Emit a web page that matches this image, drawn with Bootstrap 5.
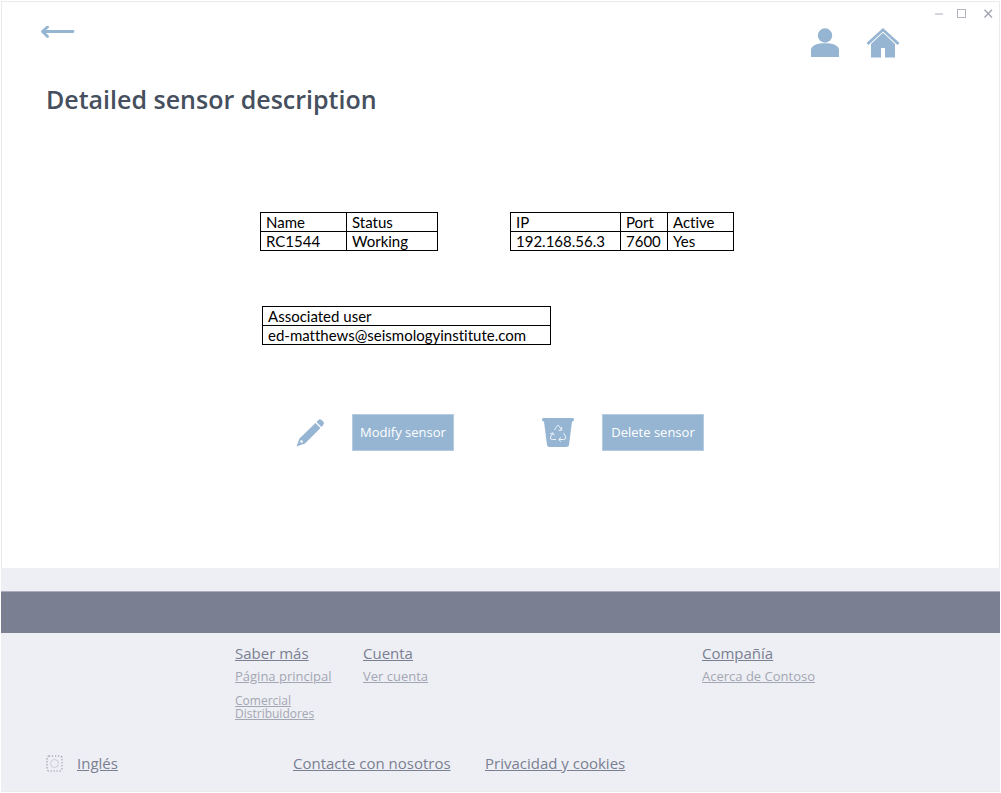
<!DOCTYPE html>
<html lang="en">
<head>
<meta charset="utf-8">
<meta name="viewport" content="width=device-width, initial-scale=1">
<title>Detailed sensor description</title>
<link href="https://cdn.jsdelivr.net/npm/bootstrap@5.3.0/dist/css/bootstrap.min.css" rel="stylesheet">
<style>
  :root { --accent: #95b5d2; --panel: #eeeff4; --slate: #7a7f92; --muted-link: #a3a6b3; }
  body { font-family: "Open Sans", "Noto Sans", sans-serif; background: #fff; padding: 1px; }
  .app-window { min-height: calc(100vh - 2px); border: 1px solid #ebebeb; }
  .plain-btn { border: 0; background: none; padding: 0; display: block; line-height: 0; }
  .title-bar { height: 24px; padding: 5px 5px 0 0; gap: 12px; }
  .tool-row { padding: 0 99px 0 38px; height: 32px; }
  .tool-nav { gap: 26px; }
  .page-title { font-size: 25px; font-weight: 600; line-height: 36px; color: #464f5d; margin: 23px 0 0 44px; }
  .details { padding-left: 258px; padding-top: 95px; }
  .pairs { column-gap: 72px; }
  .data-grid { border-collapse: collapse; font-family: Lato, sans-serif; font-size: 15px; font-variant-ligatures: none; line-height: 18px; color: #000; table-layout: fixed; }
  .data-grid th, .data-grid td { border: 1px solid #000; padding: 0 5px; font-weight: 400; white-space: nowrap; }
  .name-grid { width: 178px; } .ip-grid { width: 224px; }
  .col-a { width: 86px; } .col-ip { width: 110px; } .col-port { width: 47px; }
  .user-grid { width: 289px; margin: 55px 0 0 2px; }
  .actions { margin: 69px 0 0 36px; column-gap: 87px; }
  .action { column-gap: 27px; }
  .action svg { margin-right: -1px; }
  .action-btn { width: 102px; height: 37px; padding: 0; border: 1px solid #b4cbe0; border-radius: 0; background: var(--accent); color: #fff; font-size: 13px; }
  .action-btn:hover { background: #7fa4c6; color: #fff; }
  .site-footer { background: var(--panel); height: 223px; padding-top: 23px; margin: 0 -1px; }
  .band { background: var(--slate); height: 42px; border-top: 1px solid #a9adbb; }
  .site-footer a { color: var(--slate); font-size: 15px; line-height: 20px; display: block; width: max-content; }
  .site-footer a.sub-link { color: var(--muted-link); font-size: 13px; line-height: 16px; margin-top: 5px; }
  .links { padding: 10px 0 0 234px; }
  .link-more { width: 128px; } .link-account { width: 339px; }
  .site-footer .stacked { margin-top: 10px; }
  .site-footer .stacked a.sub-link { font-size: 12px; line-height: 13px; margin-top: 0; }
  .bottom-row { padding: 0 0 18px 45px; }
  .bottom-lang { width: 247px; gap: 14px; }
  .bottom-contact { width: 192px; }
</style>
</head>
<body>
<div class="app-window d-flex flex-column">
  <header>
    <div class="title-bar d-flex justify-content-end">
      <button class="plain-btn align-self-start" type="button" aria-label="Minimize"><svg width="11" height="11"><path d="M2 7H10" stroke="#cbcbd3" stroke-width="1.600"/></svg></button>
      <button class="plain-btn align-self-start" type="button" aria-label="Maximize"><svg width="11" height="11"><rect x="1.500" y="2.500" width="8" height="8" fill="none" stroke="#b4b4c1"/></svg></button>
      <button class="plain-btn align-self-start ms-1" type="button" aria-label="Close"><svg width="11" height="11"><path d="M1.500 2.800L9 10.500M9 2.800L1.500 10.500" stroke="#a4a5b2" stroke-width="1.400"/></svg></button>
    </div>
    <div class="tool-row d-flex justify-content-between align-items-start">
      <button class="plain-btn" type="button" aria-label="Back"><svg width="36" height="13"><path d="M33 5.500H3M7.500 1L2.500 5.500L7.500 10.500" fill="none" stroke="#95b5d2" stroke-width="2.800" stroke-linecap="round" stroke-linejoin="round"/></svg></button>
      <nav class="tool-nav d-flex" aria-label="Main">
        <a href="#" aria-label="Account"><svg class="d-block" width="30" height="32" fill="#95b5d2"><circle cx="15" cy="9.500" r="7.200"/><path d="M1 31V24C1 19 8 17.200 15 17.200S29 19 29 24V31Z"/></svg></a>
        <a href="#" aria-label="Home"><svg class="d-block" width="34" height="32" fill="#95b5d2"><path d="M.5 17L17 2L33.500 17L31.500 19L17 5.600L2.500 19Z"/><path d="M5 18L17 6.800L29 18V31.500H19V22H15V31.500H5Z"/></svg></a>
      </nav>
    </div>
  </header>

  <main class="flex-grow-1">
    <h1 class="page-title">Detailed sensor description</h1>
    <div class="details">
      <div class="pairs d-flex">
        <table class="data-grid name-grid">
          <colgroup><col class="col-a"><col></colgroup>
          <thead><tr><th scope="col">Name</th><th scope="col">Status</th></tr></thead>
          <tbody><tr><td>RC1544</td><td>Working</td></tr></tbody>
        </table>
        <table class="data-grid ip-grid">
          <colgroup><col class="col-ip"><col class="col-port"><col></colgroup>
          <thead><tr><th scope="col">IP</th><th scope="col">Port</th><th scope="col">Active</th></tr></thead>
          <tbody><tr><td>192.168.56.3</td><td>7600</td><td>Yes</td></tr></tbody>
        </table>
      </div>
      <table class="data-grid user-grid">
        <thead><tr><th scope="col">Associated user</th></tr></thead>
        <tbody><tr><td>ed-matthews@seismologyinstitute.com</td></tr></tbody>
      </table>
      <div class="actions d-flex">
        <div class="action d-flex align-items-center">
          <svg width="30" height="30" fill="#95b5d2"><path d="M.5 28.500L3.500 20.500L19.500 5L24.500 10L9 25.500Z"/><path d="M20.500 4L22.500 2Q24 .5 25.500 2L27.500 4Q28.500 5.500 27.500 6.500L25.500 9Z"/><circle cx="5.500" cy="23.500" r="1.300" fill="#fff"/></svg>
          <button class="btn action-btn" type="button">Modify sensor</button>
        </div>
        <div class="action d-flex align-items-center">
          <svg width="35" height="32" viewBox="0 0 35 32"><path d="M2 1H32Q33 1 33 2.500Q33 4.500 31.500 4.500H31L28 28Q27.700 30 25.500 30H8.500Q6.300 30 6 28L3 4.500H2.500Q1 4.500 1 2.500Q1 1 2 1Z" fill="#95b5d2"/><path d="M13.500 13L15.500 9.500Q17 7 18.500 9.500L20.500 13M20.700 10V13.300H17.500M22.500 16L24.800 20Q25.500 22.500 22.500 22.500H18M20 20.300L17.700 22.500L20 24.700M15 22.500H11.500Q8.500 22.500 9.500 20L12 16M9 17L12 15.800L13.300 18.500" fill="none" stroke="#eaf2fa" stroke-width="1"/></svg>
          <button class="btn action-btn" type="button">Delete sensor</button>
        </div>
      </div>
    </div>
  </main>

  <footer class="site-footer d-flex flex-column">
    <div class="band"></div>
    <div class="links d-flex flex-grow-1">
      <div class="link-more">
        <a href="#">Saber más</a>
        <a href="#" class="sub-link">Página principal</a>
        <div class="stacked">
          <a href="#" class="sub-link">Comercial</a>
          <a href="#" class="sub-link">Distribuidores</a>
        </div>
      </div>
      <div class="link-account">
        <a href="#">Cuenta</a>
        <a href="#" class="sub-link">Ver cuenta</a>
      </div>
      <div>
        <a href="#">Compañía</a>
        <a href="#" class="sub-link">Acerca de Contoso</a>
      </div>
    </div>
    <div class="bottom-row d-flex align-items-center">
      <div class="bottom-lang d-flex align-items-center">
        <svg width="17" height="17"><rect x="1" y="1" width="15" height="15" rx="2" fill="none" stroke="#8f8f9c" stroke-width="1.200" stroke-dasharray="1.200 1.800"/><circle cx="8.500" cy="8.500" r="4" fill="none" stroke="#cdced5"/></svg>
        <a href="#">Inglés</a>
      </div>
      <div class="bottom-contact"><a href="#">Contacte con nosotros</a></div>
      <a href="#">Privacidad y cookies</a>
    </div>
  </footer>
</div>
<script src="https://cdn.jsdelivr.net/npm/bootstrap@5.3.0/dist/js/bootstrap.bundle.min.js"></script>
</body>
</html>
